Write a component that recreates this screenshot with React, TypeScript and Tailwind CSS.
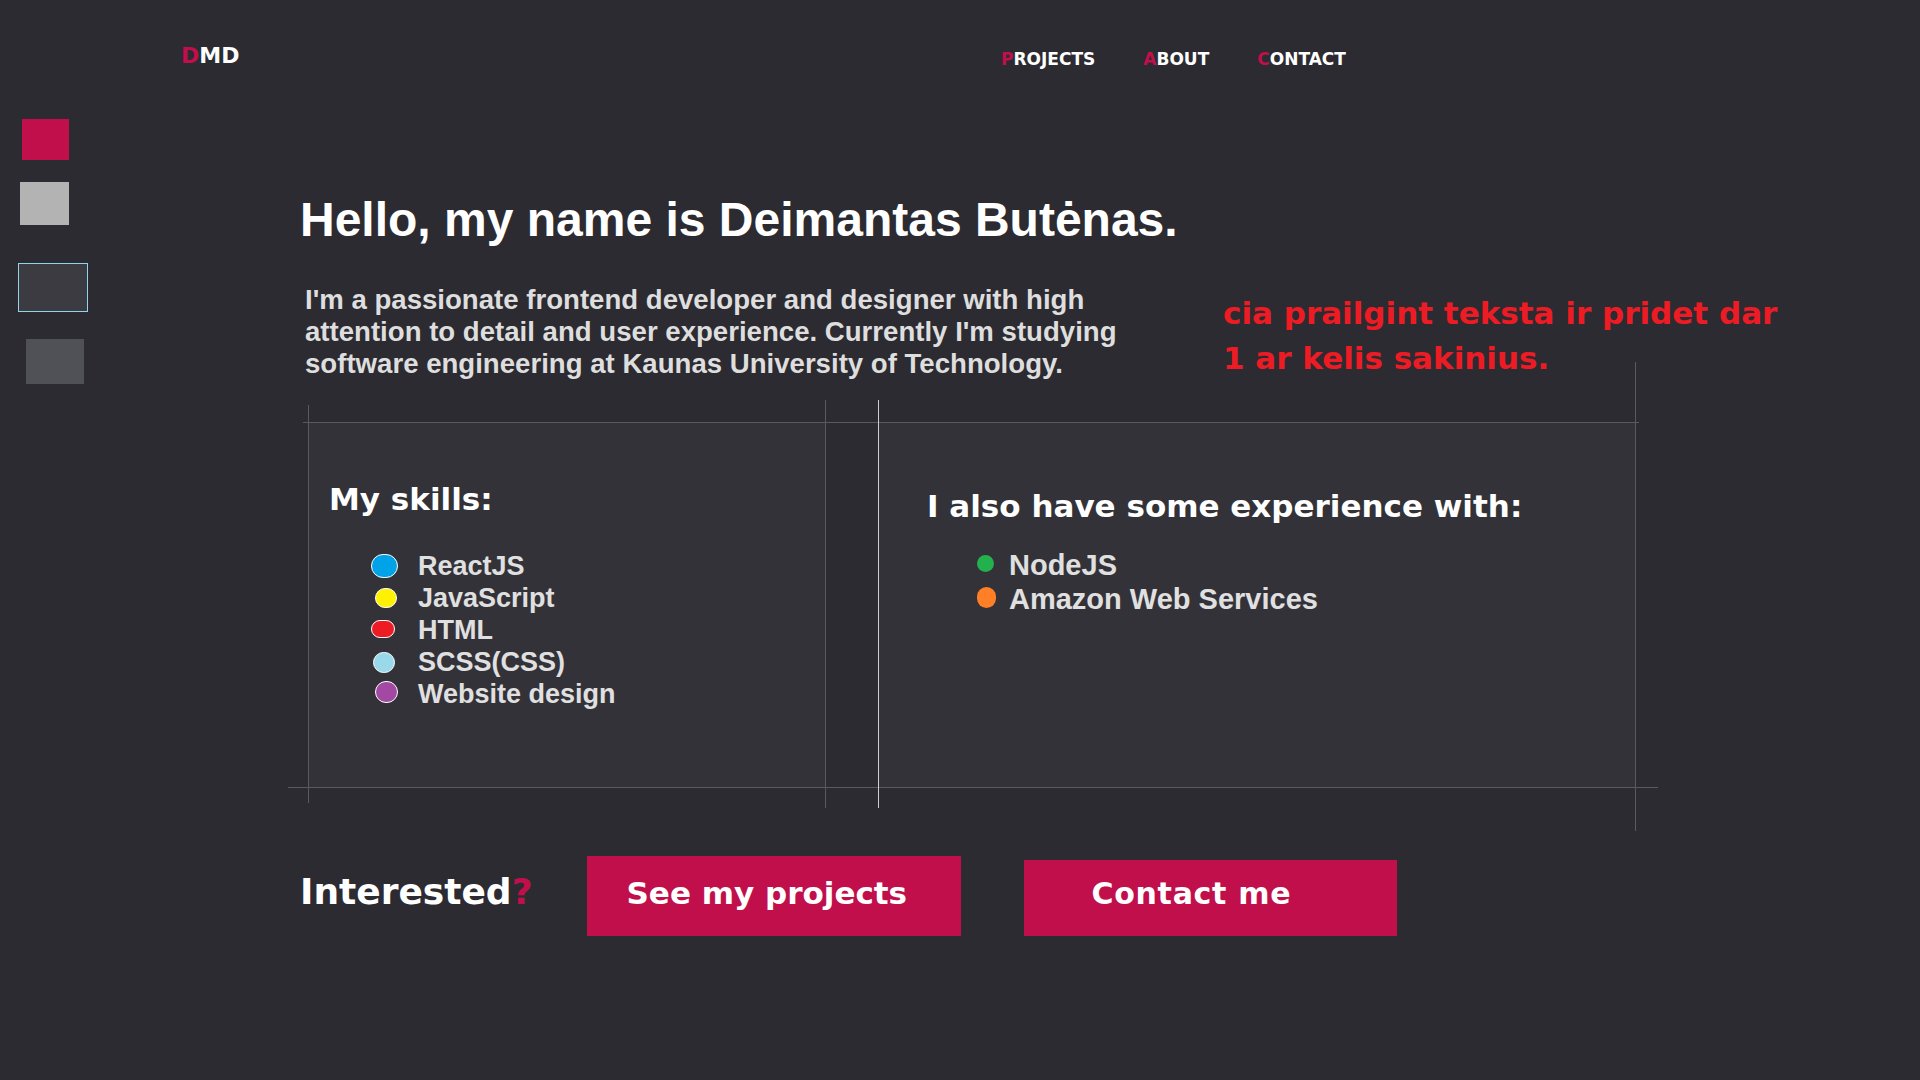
import React from "react";

const heavy = "font-['DejaVu_Sans',sans-serif] font-bold";

const skills = [
  { name: "ReactJS", dot: "w-[27px] h-[24px] bg-[#00a2e8]", ml: "ml-0" },
  { name: "JavaScript", dot: "w-[22px] h-[20px] bg-[#fff200]", ml: "ml-[4px]" },
  { name: "HTML", dot: "w-[24px] h-[18px] bg-[#ed1c24] -mt-[3px]", ml: "ml-0" },
  { name: "SCSS(CSS)", dot: "w-[22px] h-[21px] bg-[#99d9ea]", ml: "ml-[2px]" },
  { name: "Website design", dot: "w-[23px] h-[22px] bg-[#a349a4] -mt-[5px]", ml: "ml-[4px]" },
];

const extra = [
  { name: "NodeJS", dot: "w-[17px] h-[17px] bg-[#22b14c] -mt-[3px]" },
  { name: "Amazon Web Services", dot: "w-[19px] h-[21px] bg-[#ff7f27] -mt-[3px]" },
];

const NavLink = ({ label }: { label: string }) => (
  <a href="#" className={`${heavy} text-[17px] leading-none text-white`}>
    <span className="text-[#c00f4b]">{label[0]}</span>
    {label.slice(1)}
  </a>
);

export default function App() {
  return (
    <div className="min-h-screen w-full bg-[#2c2b31] font-['Liberation_Sans',Arial,sans-serif] text-white">
      {/* header */}
      <header className="flex items-start pt-[45px] pl-[181px]">
        <div className={`${heavy} w-[820px] text-[22px] leading-none`}>
          <span className="text-[#c00f4b]">D</span>MD
        </div>
        <nav className="mt-[6px] flex gap-[48px]">
          <NavLink label="PROJECTS" />
          <NavLink label="ABOUT" />
          <NavLink label="CONTACT" />
        </nav>
      </header>

      <div className="mt-[51px] flex">
        {/* side blocks */}
        <div className="flex w-[300px] shrink-0 flex-col items-start">
          <div className="ml-[22px] h-[41px] w-[47px] bg-[#c00f4b]" />
          <div className="ml-[20px] mt-[22px] h-[43px] w-[49px] bg-[#b3b3b3]" />
          <div className="ml-[18px] mt-[38px] h-[49px] w-[70px] border border-[#8fd6ea] bg-[#3c3b42]" />
          <div className="ml-[26px] mt-[27px] h-[45px] w-[58px] bg-[#505057]" />
        </div>

        <main className="flex flex-col">
          <h1 className="mt-[77px] text-[48px] font-bold leading-none text-white">
            Hello, my name is Deimantas Butėnas.
          </h1>

          <div className="mt-[40px] flex items-start">
            <p className="ml-[5px] w-[850px] text-[27.6px] font-bold leading-[32px] text-[#dedede]">
              I'm a passionate frontend developer and designer with high attention to detail and
              user experience. Currently I'm studying software engineering at Kaunas University of
              Technology.
            </p>
            <p className={`${heavy} ml-[68px] mt-[7px] w-[560px] text-[31px] leading-[45px] text-[#ed1c24]`}>
              cia prailgint teksta ir pridet dar 1 ar kelis sakinius.
            </p>
          </div>

          {/* skills panels */}
          <div className="relative ml-[8px] mt-[41px] flex h-[365px] w-[1327px]">
            <div className="h-full w-[517px] bg-[#333238] pl-[21px] pt-[62px]">
              <h2 className={`${heavy} text-[31px] leading-none text-white`}>My skills:</h2>
              <ul className="mt-[35px] pl-[42px]">
                {skills.map((s) => (
                  <li key={s.name} className="flex h-[32px] items-center">
                    <span className="flex w-[47px] shrink-0">
                      <span className={`${s.ml} ${s.dot} rounded-full border border-white`} />
                    </span>
                    <span className="text-[27px] font-bold leading-[32px] text-[#e0e0e0]">
                      {s.name}
                    </span>
                  </li>
                ))}
              </ul>
            </div>
            <div className="ml-[53px] h-full w-[757px] bg-[#333238] pl-[49px] pt-[69px]">
              <h2 className={`${heavy} text-[31px] leading-none text-white`}>
                I also have some experience with:
              </h2>
              <ul className="mt-[26px] pl-[50px]">
                {extra.map((s) => (
                  <li key={s.name} className="flex h-[34px] items-center">
                    <span className="flex w-[32px] shrink-0">
                      <span className={`${s.dot} rounded-full`} />
                    </span>
                    <span className="text-[29px] font-bold leading-[34px] text-[#e0e0e0]">
                      {s.name}
                    </span>
                  </li>
                ))}
              </ul>
            </div>

            {/* drafting lines */}
            <div className="absolute left-[-5px] top-0 h-px w-[1336px] bg-[#5a5960]" />
            <div className="absolute left-[-20px] top-[365px] h-px w-[1370px] bg-[#5a5960]" />
            <div className="absolute left-0 top-[-17px] h-[398px] w-px bg-[#5a5960]" />
            <div className="absolute left-[517px] top-[-22px] h-[408px] w-px bg-[#5a5960]" />
            <div className="absolute left-[570px] top-[-22px] h-[408px] w-px bg-[#cfcfcf]" />
            <div className="absolute left-[1327px] top-[-60px] h-[469px] w-px bg-[#5a5960]" />
          </div>

          {/* call to action */}
          <div className="mt-[69px] flex items-start">
            <div className={`${heavy} mt-[18px] text-[36px] leading-none text-white`}>
              Interested<span className="text-[#c00f4b]">?</span>
            </div>
            <a
              href="#"
              className={`${heavy} ml-[54px] h-[80px] w-[374px] bg-[#c00f4b] pl-[40px] pt-[22px] text-[31px] leading-none text-white`}
            >
              See my projects
            </a>
            <a
              href="#"
              className={`${heavy} ml-[63px] mt-[4px] h-[76px] w-[373px] bg-[#c00f4b] pl-[68px] pt-[19px] text-[30px] leading-none tracking-[0.7px] text-white`}
            >
              Contact me
            </a>
          </div>
        </main>
      </div>
    </div>
  );
}
